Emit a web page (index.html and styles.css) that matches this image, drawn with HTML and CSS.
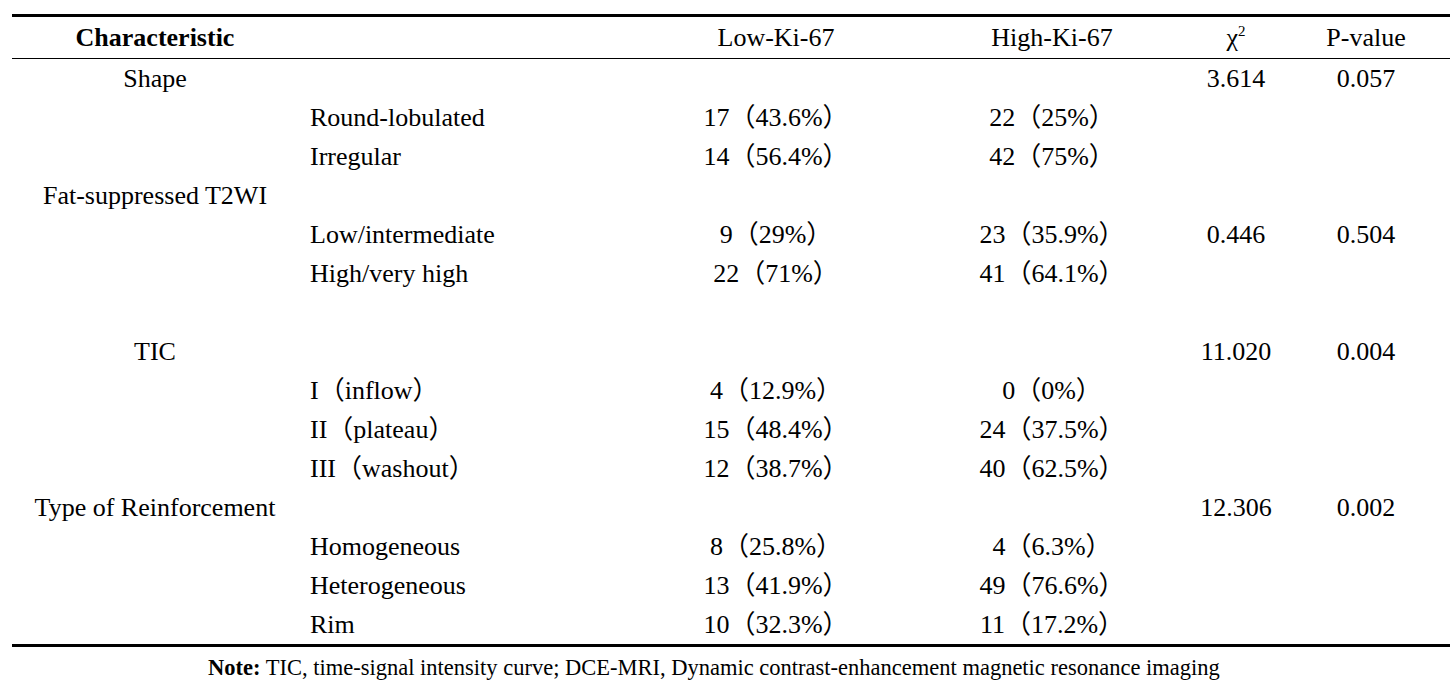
FILE: index.html
```html
<!DOCTYPE html>
<html lang="en">
<head>
<meta charset="utf-8">
<title>Ki-67 characteristics</title>
<link rel="stylesheet" href="styles.css">
</head>
<body>
<div class="page">
  <table class="data">
    <colgroup>
      <col class="c1"><col class="c2"><col class="c3"><col class="c4"><col class="c5"><col class="c6">
    </colgroup>
    <thead>
      <tr>
        <th class="cat">Characteristic</th>
        <th></th>
        <th class="num">Low-Ki-67</th>
        <th class="num">High-Ki-67</th>
        <th class="num">χ<sup>2</sup></th>
        <th class="num">P-value</th>
      </tr>
    </thead>
    <tbody>
      <tr><td class="cat">Shape</td><td></td><td></td><td></td><td class="num">3.614</td><td class="num">0.057</td></tr>
      <tr><td></td><td class="sub">Round-lobulated</td><td class="num">17（43.6%）</td><td class="num">22（25%）</td><td></td><td></td></tr>
      <tr><td></td><td class="sub">Irregular</td><td class="num">14（56.4%）</td><td class="num">42（75%）</td><td></td><td></td></tr>
      <tr><td class="cat">Fat-suppressed T2WI</td><td></td><td></td><td></td><td></td><td></td></tr>
      <tr><td></td><td class="sub">Low/intermediate</td><td class="num">9（29%）</td><td class="num">23（35.9%）</td><td class="num">0.446</td><td class="num">0.504</td></tr>
      <tr><td></td><td class="sub">High/very high</td><td class="num">22（71%）</td><td class="num">41（64.1%）</td><td></td><td></td></tr>
      <tr><td></td><td></td><td></td><td></td><td></td><td></td></tr>
      <tr><td class="cat">TIC</td><td></td><td></td><td></td><td class="num">11.020</td><td class="num">0.004</td></tr>
      <tr><td></td><td class="sub">I（inflow）</td><td class="num">4（12.9%）</td><td class="num">0（0%）</td><td></td><td></td></tr>
      <tr><td></td><td class="sub">II（plateau）</td><td class="num">15（48.4%）</td><td class="num">24（37.5%）</td><td></td><td></td></tr>
      <tr><td></td><td class="sub">III（washout）</td><td class="num">12（38.7%）</td><td class="num">40（62.5%）</td><td></td><td></td></tr>
      <tr><td class="cat">Type of Reinforcement</td><td></td><td></td><td></td><td class="num">12.306</td><td class="num">0.002</td></tr>
      <tr><td></td><td class="sub">Homogeneous</td><td class="num">8（25.8%）</td><td class="num">4（6.3%）</td><td></td><td></td></tr>
      <tr><td></td><td class="sub">Heterogeneous</td><td class="num">13（41.9%）</td><td class="num">49（76.6%）</td><td></td><td></td></tr>
      <tr><td></td><td class="sub">Rim</td><td class="num">10（32.3%）</td><td class="num">11（17.2%）</td><td></td><td></td></tr>
    </tbody>
  </table>
  <p class="note"><b>Note:</b> TIC, time-signal intensity curve; DCE-MRI, Dynamic contrast-enhancement magnetic resonance imaging</p>
</div>
</body>
</html>
```

FILE: styles.css
```css
html, body {
  margin: 0;
  padding: 0;
  background: #ffffff;
}

body {
  font-family: "Liberation Serif", "Noto Sans CJK SC", serif;
  color: #000000;
}

.page {
  padding: 14px 0 0 12px;
}

.data {
  border-collapse: collapse;
  table-layout: fixed;
  width: 1438px;
  font-size: 26px;
  border-top: 3px solid #000;
  border-bottom: 3px solid #000;
}

.c1 { width: 286px; }
.c2 { width: 340px; }
.c3 { width: 276px; }
.c4 { width: 276px; }
.c5 { width: 92px; }
.c6 { width: 168px; }

.data th,
.data td {
  padding: 0;
  white-space: nowrap;
  vertical-align: top;
}

.data thead th {
  height: 40px;
  line-height: 40px;
  padding-top: 1px;
  box-sizing: border-box;
  font-weight: normal;
  border-bottom: 1px solid #000;
}

.data thead th.cat {
  font-weight: bold;
}

.data tbody td {
  height: 39px;
  line-height: 39px;
}

.cat { text-align: center; }
.num { text-align: center; }
.sub { text-align: left; padding-left: 12px !important; }

sup {
  font-size: 15px;
  line-height: 0;
  vertical-align: 10px;
}

.note {
  margin: 8px 0 0 196px;
  font-size: 22.5px;
  line-height: 26px;
}
```
